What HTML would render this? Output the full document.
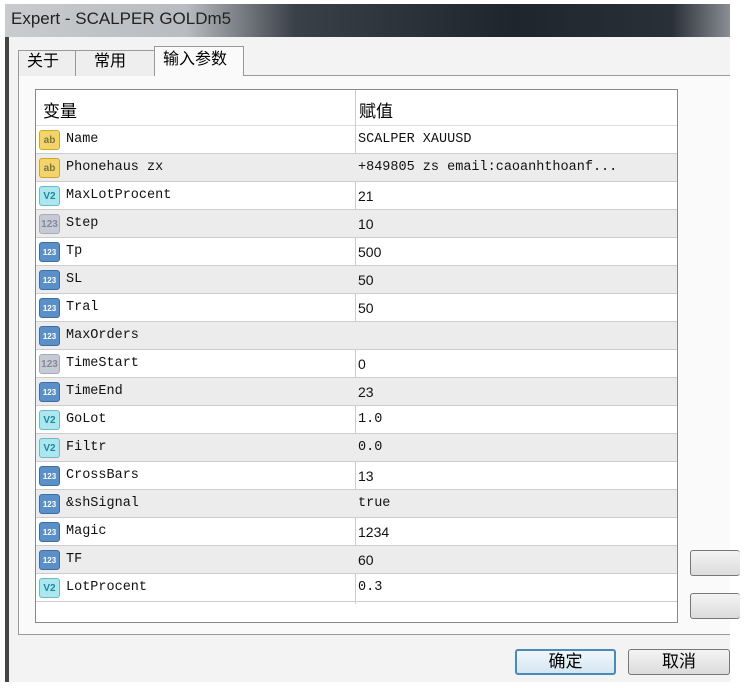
<!DOCTYPE html><html><head><meta charset="utf-8"><style>
*{box-sizing:border-box;margin:0;padding:0}
body{width:744px;height:688px;background:#fff;position:relative;overflow:hidden;font-family:"Liberation Sans","Noto Sans CJK SC",sans-serif}
.title{position:absolute;left:5px;top:4px;width:725px;height:33px;background:linear-gradient(90deg,#c9cbce 0%,#b8bbbf 25%,#3a4048 40%,#1f252d 70%,#2a3038 92%,#8a8e94 100%);font-size:17px;color:#222;padding:5px 0 0 6px}
.win{position:absolute;left:5px;top:37px;width:725px;height:645px;background:#f3f3f3;border-left:4px solid #444}
.tabs{position:absolute;left:18px;top:46px;height:30px}
.tab{position:absolute;top:4px;height:26px;border:1px solid #999;border-bottom:none;background:#eee;font-size:16px;line-height:18px;padding:2px 8px}
.panel{position:absolute;left:18px;top:75px;width:712px;height:560px;border:1px solid #999;border-right:none;background:#fafafa}
.grid{position:absolute;left:35px;top:89px;width:643px;height:534px;border:1px solid #888;background:#fff}
.hdr{position:absolute;left:0;top:0;width:641px;height:36px;border-bottom:1px solid #ddd;font-size:17px}
.row{position:absolute;left:0;width:641px;height:28px;border-bottom:1px solid #ccc;font-family:"Liberation Mono",monospace;font-size:13.5px;color:#111}
.row.g{background:#ececec}
.ic{position:absolute;left:3px;top:4px;width:21px;height:20px;border-radius:3px;font-family:"Liberation Sans",sans-serif;font-size:10px;font-weight:bold;text-align:center;line-height:20px}
.ab{background:#f2d46a;color:#774;border:1px solid #c9a830}
.vz{background:#aee6ee;color:#1a8aa0;border:1px solid #6bc}
.n{background:#5b8fc8;color:#fff;border:1px solid #3a6ea8;font-size:8px}
.gr{background:#c4cbd4;color:#889;border:1px solid #aab}
.nm{position:absolute;left:30px;top:6px;line-height:16px}
.vl{position:absolute;left:322px;top:6px;line-height:16px;font-family:"Liberation Sans",sans-serif;font-size:14px}
.vl.m{font-family:"Liberation Mono",monospace;font-size:13.5px}
.sep{position:absolute;left:319px;top:0;width:1px;background:#ccc}
.btn{position:absolute;border:1px solid #777;border-radius:3px;background:linear-gradient(#f4f4f4,#dcdcdc);font-size:17px;line-height:20px;text-align:center}
</style></head><body>
<div class="title">Expert - SCALPER GOLDm5</div>
<div class="win"></div>
<div class="panel"></div>
<div class="tabs">
<div class="tab" style="left:0;width:58px">关于</div>
<div class="tab" style="left:57px;width:80px;padding-left:18px">常用</div>
<div class="tab" style="left:136px;top:0;height:30px;width:90px;background:#fafafa;padding-top:4px">输入参数</div>
</div>
<div class="grid">
<div class="hdr"><span style="position:absolute;left:7px;top:7px">变量</span><span style="position:absolute;left:323px;top:7px">赋值</span></div>
<div class="sep" style="top:0;height:514px"></div>
<div class="row" style="top:36px"><div class="ic ab">ab</div><span class="nm">Name</span><span class="vl m">SCALPER XAUUSD</span></div>
<div class="row g" style="top:64px"><div class="ic ab">ab</div><span class="nm">Phonehaus zx</span><span class="vl m">+849805  zs   email:caoanhthoanf...</span></div>
<div class="row" style="top:92px"><div class="ic vz">V2</div><span class="nm">MaxLotProcent</span><span class="vl">21</span></div>
<div class="row g" style="top:120px"><div class="ic gr">123</div><span class="nm">Step</span><span class="vl">10</span></div>
<div class="row" style="top:148px"><div class="ic n">123</div><span class="nm">Tp</span><span class="vl">500</span></div>
<div class="row g" style="top:176px"><div class="ic n">123</div><span class="nm">SL</span><span class="vl">50</span></div>
<div class="row" style="top:204px"><div class="ic n">123</div><span class="nm">Tral</span><span class="vl">50</span></div>
<div class="row g" style="top:232px"><div class="ic n">123</div><span class="nm">MaxOrders</span><span class="vl"></span></div>
<div class="row" style="top:260px"><div class="ic gr">123</div><span class="nm">TimeStart</span><span class="vl">0</span></div>
<div class="row g" style="top:288px"><div class="ic n">123</div><span class="nm">TimeEnd</span><span class="vl">23</span></div>
<div class="row" style="top:316px"><div class="ic vz">V2</div><span class="nm">GoLot</span><span class="vl m">1.0</span></div>
<div class="row g" style="top:344px"><div class="ic vz">V2</div><span class="nm">Filtr</span><span class="vl m">0.0</span></div>
<div class="row" style="top:372px"><div class="ic n">123</div><span class="nm">CrossBars</span><span class="vl">13</span></div>
<div class="row g" style="top:400px"><div class="ic n">123</div><span class="nm">&amp;shSignal</span><span class="vl m">true</span></div>
<div class="row" style="top:428px"><div class="ic n">123</div><span class="nm">Magic</span><span class="vl">1234</span></div>
<div class="row g" style="top:456px"><div class="ic n">123</div><span class="nm">TF</span><span class="vl">60</span></div>
<div class="row" style="top:484px"><div class="ic vz">V2</div><span class="nm">LotProcent</span><span class="vl m">0.3</span></div>
</div>
<div class="btn" style="left:690px;top:550px;width:50px;height:26px;border-right:none"></div>
<div class="btn" style="left:690px;top:593px;width:50px;height:26px;border-right:none"></div>
<div class="btn" style="left:515px;top:649px;width:101px;height:26px;border:2px solid #4a8ab8;background:linear-gradient(#f0f7fc,#d4e6f2);padding-top:1px">确定</div>
<div class="btn" style="left:628px;top:649px;width:102px;height:26px;padding-top:2px">取消</div>
</body></html>
